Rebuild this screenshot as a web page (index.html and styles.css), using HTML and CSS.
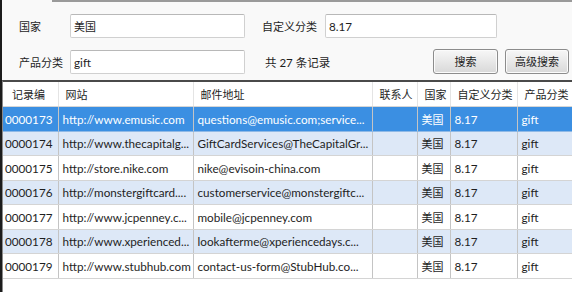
FILE: index.html
```html
<!DOCTYPE html>
<html lang="zh-CN">
<head>
    <meta charset="UTF-8">
    <title>记录查询</title>
    <link rel="stylesheet" href="styles.css">
</head>
<body>
    <div class="window">
        <div class="top-edge"></div>

        <!-- 検索条件 -->
        <div class="search-form">
            <div class="form-row">
                <label class="field-label">国家</label>
                <input class="text-input cjk" type="text" value="美国">
                <label class="field-label field-label-wide">自定义分类</label>
                <input class="text-input text-input-short" type="text" value="8.17">
            </div>
            <div class="form-row form-row-second">
                <label class="field-label">产品分类</label>
                <input class="text-input" type="text" value="gift">
                <span class="record-count">共 27 条记录</span>
                <button class="btn btn-search">搜索</button>
                <button class="btn btn-advanced">高级搜索</button>
            </div>
        </div>

        <!-- 一覧 -->
        <div class="grid-wrap">
            <table class="record-grid">
                <colgroup>
                    <col class="c-id">
                    <col class="c-site">
                    <col class="c-mail">
                    <col class="c-contact">
                    <col class="c-country">
                    <col class="c-custom">
                    <col class="c-product">
                </colgroup>
                <thead>
                    <tr>
                        <th>记录编</th>
                        <th>网站</th>
                        <th>邮件地址</th>
                        <th>联系人</th>
                        <th>国家</th>
                        <th>自定义分类</th>
                        <th>产品分类</th>
                    </tr>
                </thead>
                <tbody>
                    <tr class="selected">
                        <td>0000173</td>
                        <td>http://www.emusic.com</td>
                        <td>questions@emusic.com;service...</td>
                        <td></td>
                        <td class="cjk">美国</td>
                        <td>8.17</td>
                        <td>gift</td>
                    </tr>
                    <tr class="alt">
                        <td>0000174</td>
                        <td>http://www.thecapitalg...</td>
                        <td>GiftCardServices@TheCapitalGr...</td>
                        <td></td>
                        <td class="cjk">美国</td>
                        <td>8.17</td>
                        <td>gift</td>
                    </tr>
                    <tr>
                        <td>0000175</td>
                        <td>http://store.nike.com</td>
                        <td>nike@evisoin-china.com</td>
                        <td></td>
                        <td class="cjk">美国</td>
                        <td>8.17</td>
                        <td>gift</td>
                    </tr>
                    <tr class="alt">
                        <td>0000176</td>
                        <td>http://monstergiftcard....</td>
                        <td>customerservice@monstergiftc...</td>
                        <td></td>
                        <td class="cjk">美国</td>
                        <td>8.17</td>
                        <td>gift</td>
                    </tr>
                    <tr>
                        <td>0000177</td>
                        <td>http://www.jcpenney.c...</td>
                        <td>mobile@jcpenney.com</td>
                        <td></td>
                        <td class="cjk">美国</td>
                        <td>8.17</td>
                        <td>gift</td>
                    </tr>
                    <tr class="alt">
                        <td>0000178</td>
                        <td>http://www.xperienced...</td>
                        <td>lookafterme@xperiencedays.c...</td>
                        <td></td>
                        <td class="cjk">美国</td>
                        <td>8.17</td>
                        <td>gift</td>
                    </tr>
                    <tr>
                        <td>0000179</td>
                        <td>http://www.stubhub.com</td>
                        <td>contact-us-form@StubHub.co...</td>
                        <td></td>
                        <td class="cjk">美国</td>
                        <td>8.17</td>
                        <td>gift</td>
                    </tr>
                </tbody>
            </table>
        </div>
    </div>
</body>
</html>
```

FILE: styles.css
```css
html, body {
    margin: 0;
    height: 100%;
}

body {
    font-family: Lato, "Noto Sans CJK SC", sans-serif;
    font-size: 11.7px;
    color: #1e1e1e;
    background-color: #f9f9f9;
    overflow: hidden;
}

/* 中文だけの文字列は少し小さく */
.cjk {
    font-size: 11px;
}

.window {
    height: 100%;
    border-left: 2px solid #1c1c1c;
    display: flex;
    flex-direction: column;
}

/* 上端のタブ境界線 */
.top-edge {
    margin-left: 50px;
    height: 2px;
    background-color: #9a9a9a;
}

.search-form {
    padding: 12px 0 0 17px;
    height: 78px;
    box-sizing: border-box;
}

.form-row {
    display: flex;
    align-items: center;
    height: 24px;
}

.form-row-second {
    margin-top: 12px;
}

.field-label {
    width: 51px;
    font-size: 11px;
}

.field-label-wide {
    width: 63px;
    margin-left: 17px;
}

.text-input {
    width: 175px;
    height: 24px;
    box-sizing: border-box;
    border: 1px solid #d0d0d0;
    border-top-color: #b8b8b8;
    border-radius: 2px;
    background: #fff;
    padding: 0 3px;
    font-family: inherit;
    font-size: 11.7px;
    color: #1e1e1e;
    outline: none;
}

.text-input.cjk {
    font-size: 11px;
}

.text-input-short {
    width: 172px;
}

.record-count {
    margin-left: 20px;
    flex: 1;
    font-size: 11.5px;
}

/* ボタン */
.btn {
    height: 25px;
    margin-top: -2px;
    border: 1px solid #8c8c8c;
    border-radius: 3px;
    background: linear-gradient(#f7f7f7, #e8e8e8 50%, #d8d8d8);
    box-shadow: inset 0 0 0 1px #fbfbfb;
    font-family: inherit;
    font-size: 11px;
    color: #1e1e1e;
    padding: 0;
}

.btn-search {
    width: 65px;
}

.btn-advanced {
    width: 64px;
    margin-left: 7px;
    margin-right: 3px;
}

/* 一覧表 */
.grid-wrap {
    flex: 1;
    border-top: 2px solid #4a4a4a;
    border-left: 1px solid #8a8a8a;
    background: #fff;
    overflow: hidden;
}

.record-grid {
    border-collapse: collapse;
    table-layout: fixed;
    width: 580px;
}

.c-id { width: 55px; }
.c-site { width: 135px; }
.c-mail { width: 179px; }
.c-contact { width: 45px; }
.c-country { width: 33px; }
.c-custom { width: 67px; }
.c-product { width: 66px; }

.record-grid th {
    height: 24px;
    padding: 0 0 0 7px;
    font-weight: normal;
    font-size: 11px;
    text-align: left;
    white-space: nowrap;
    overflow: hidden;
    background: #fff;
    border-right: 1px solid #e4e4e4;
    border-bottom: 1px solid #d6d6d6;
}

.record-grid th:first-child {
    padding-left: 9px;
}

.record-grid td {
    height: 23.5px;
    padding: 0 0 0 4px;
    white-space: nowrap;
    overflow: hidden;
    border-right: 1px solid #c4c4c4;
    border-bottom: 1px solid #d4d4d4;
}

.record-grid td:first-child {
    padding-left: 2px;
}

.record-grid tr.alt td {
    background-color: #dde8f7;
}

.record-grid tr.selected td {
    background-color: #3b8fe2;
    color: #fff;
    border-bottom-color: #8fb9e6;
}
```
